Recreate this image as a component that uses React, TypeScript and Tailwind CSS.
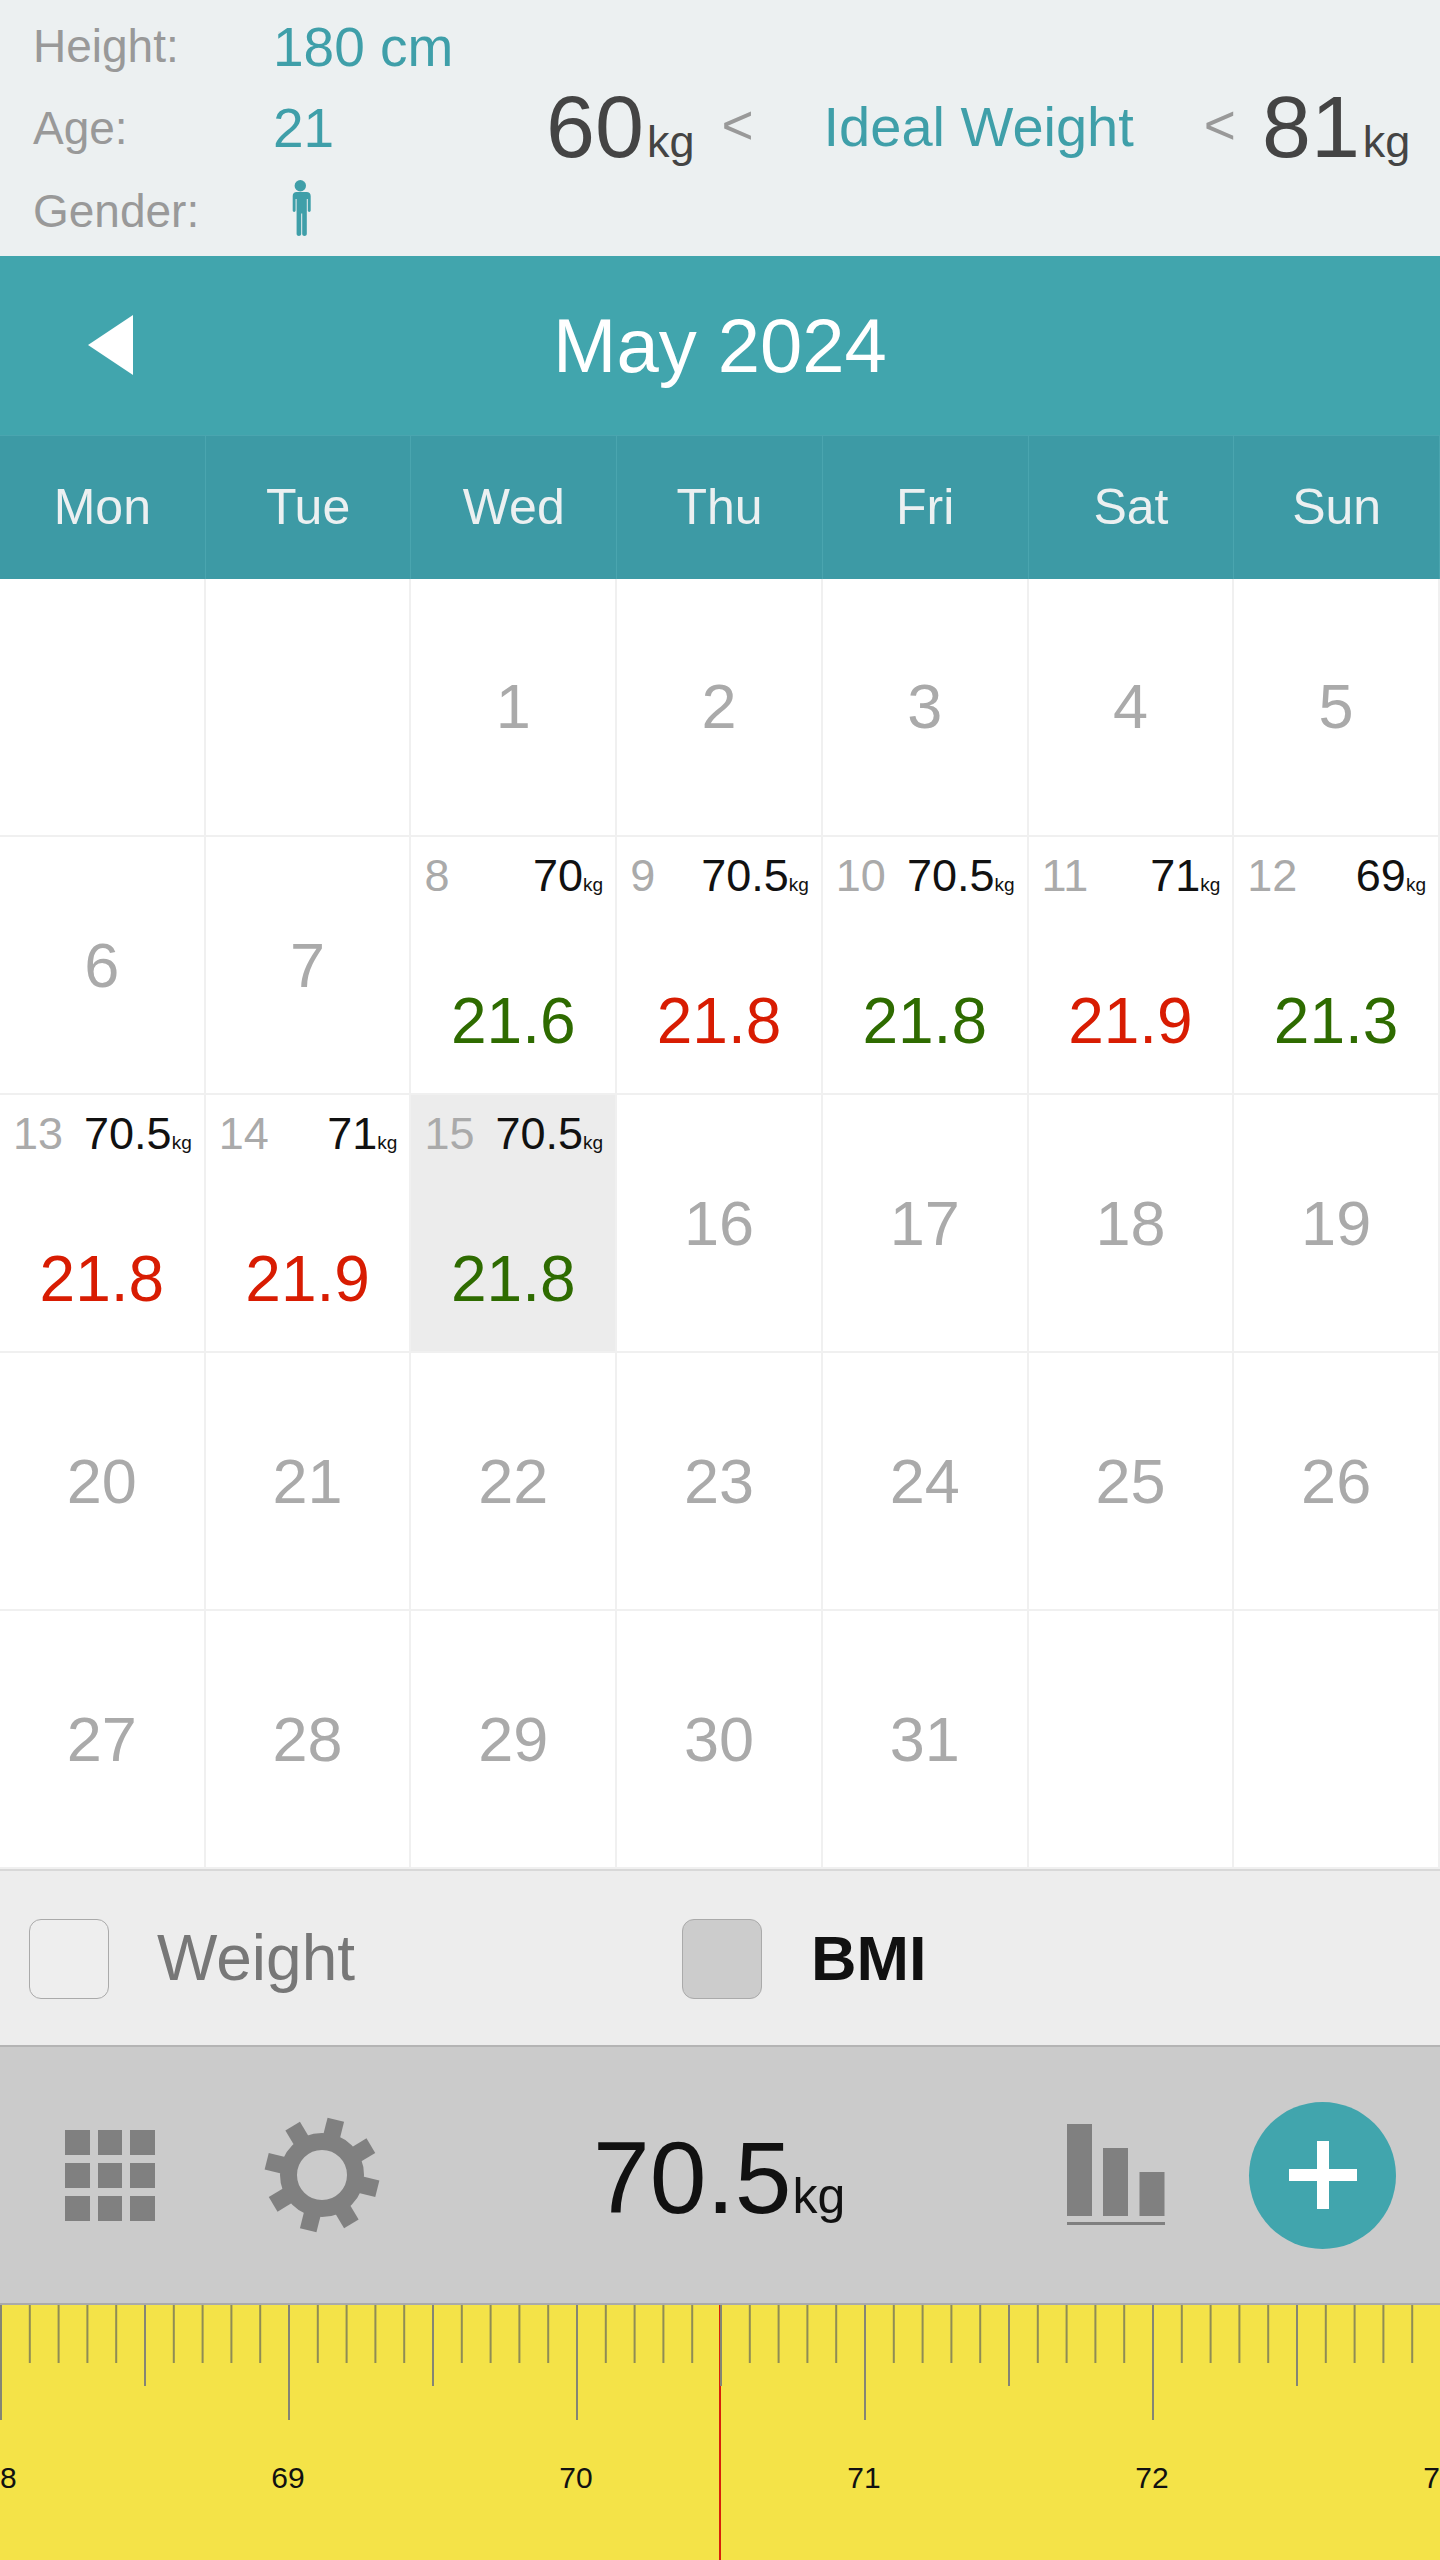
const WEEK_DAYS = ['Mon', 'Tue', 'Wed', 'Thu', 'Fri', 'Sat', 'Sun']

interface DayEntry {
  weight: string
  bmi: string
  over?: boolean
}

const ENTRIES: Record<number, DayEntry> = {
  8: { weight: '70', bmi: '21.6' },
  9: { weight: '70.5', bmi: '21.8', over: true },
  10: { weight: '70.5', bmi: '21.8' },
  11: { weight: '71', bmi: '21.9', over: true },
  12: { weight: '69', bmi: '21.3' },
  13: { weight: '70.5', bmi: '21.8', over: true },
  14: { weight: '71', bmi: '21.9', over: true },
  15: { weight: '70.5', bmi: '21.8' },
}

// May 2024 starts on a Wednesday, two blanks before the 1st
const CELLS: (number | null)[] = [
  null, null,
  ...Array.from({ length: 31 }, (_, i) => i + 1),
  null, null,
]

function PersonIcon() {
  return (
    <svg width="23" height="57" viewBox="0 0 23 57" className="block fill-[#3f9fa9]">
      <circle cx="11.3" cy="6.7" r="5.7" />
      <path d="M5 13h12.6c2.4 0 4.1 1.6 4.1 4v14.6c0 1.9-2.9 1.9-2.9 0V20h-1v35c0 2.6-4.6 2.6-4.6 0V34.5h-1V55c0 2.6-4.6 2.6-4.6 0V20h-1v11.6c0 1.9-2.9 1.9-2.9 0V17c0-2.4 1.7-4 3.8-4z" />
    </svg>
  )
}

function GridIcon() {
  return (
    <div className="grid grid-cols-3 gap-[8px] w-[90px]">
      {Array.from({ length: 9 }, (_, i) => (
        <div key={i} className="h-[25px] bg-[#808080]" />
      ))}
    </div>
  )
}

function GearIcon() {
  const teeth = [14, 59, 104, 149, 194, 239, 284, 329]
  return (
    <svg width="116" height="116" viewBox="-58 -58 116 116" className="block">
      <circle cx="0" cy="0" r="33.5" fill="none" stroke="#808080" strokeWidth="17" />
      {teeth.map(a => (
        <rect key={a} x="-8.5" y="-57" width="17" height="20" fill="#808080" transform={`rotate(${a})`} />
      ))}
    </svg>
  )
}

function BarsIcon() {
  return (
    <svg width="98" height="102" viewBox="0 0 98 102" className="block fill-[#808080]">
      <rect x="0" y="0" width="25" height="92" />
      <rect x="36" y="24" width="25" height="68" />
      <rect x="72.5" y="48" width="25" height="44" />
      <rect x="0" y="98" width="98" height="3" />
    </svg>
  )
}

function PlusButton() {
  return (
    <div className="w-[147px] h-[147px] rounded-full bg-[#41a5ad] flex items-center justify-center">
      <svg width="68" height="68" viewBox="0 0 68 68" className="block fill-white">
        <rect x="28" y="0" width="12" height="68" />
        <rect x="0" y="28" width="68" height="12" />
      </svg>
    </div>
  )
}

function Kg({ className }: { className: string }) {
  return <span className={className}>kg</span>
}

function DayCell({ day, today }: { day: number | null; today: boolean }) {
  const entry = day ? ENTRIES[day] : undefined
  const base = `h-[258px] border-r-2 border-b-2 border-[#f0f0f0] ${today ? 'bg-[#ececec]' : 'bg-white'}`

  if (!entry) {
    return (
      <div className={`${base} flex items-center justify-center text-[63px] leading-none text-[#aaaaaa] ${day && day <= 5 ? 'pb-[2px]' : ''}`}>
        {day}
      </div>
    )
  }

  return (
    <div className={`${base} pt-[16px]`}>
      <div className="flex items-baseline justify-between pl-[13px] pr-[12px] leading-[45px]">
        <span className="text-[45px] text-[#aaaaaa]">{day}</span>
        <span className="text-[45px] text-[#111111]">
          {entry.weight}
          <Kg className="text-[19px]" />
        </span>
      </div>
      <div className={`mt-[82px] text-center text-[64px] leading-[65px] ${entry.over ? 'text-[#d81c02]' : 'text-[#2e6b00]'}`}>
        {entry.bmi}
      </div>
    </div>
  )
}

function Ruler() {
  const step = 28.8
  const ticks = Array.from({ length: 51 }, (_, i) => i)
  const labels = [
    { text: '68', x: 0 },
    { text: '69', x: 288 },
    { text: '70', x: 576 },
    { text: '71', x: 864 },
    { text: '72', x: 1152 },
    { text: '73', x: 1440 },
  ]

  return (
    <div className="relative h-[257px] overflow-hidden bg-[#f4e348] border-t-2 border-[#aaaaaa]">
      <div className="absolute left-[719px] top-0 bottom-0 w-[2px] bg-[#d8200a]" />
      <svg width="1440" height="130" className="relative block">
        {ticks.map(i => {
          const h = i % 10 === 0 ? 115 : i % 5 === 0 ? 81 : 58
          return <rect key={i} x={i * step} y="0" width="2" height={h} fill={i % 5 === 0 ? '#858574' : '#8f8c55'} />
        })}
      </svg>
      {labels.map(l => (
        <span
          key={l.text}
          className="absolute top-[155px] -translate-x-1/2 text-[30px] leading-[36px] text-[#111111]"
          style={{ left: l.x }}
        >
          {l.text}
        </span>
      ))}
    </div>
  )
}

export default function App() {
  return (
    <div className="[font-family:'Liberation_Sans',Arial,sans-serif] w-[1440px] h-[2560px] overflow-hidden bg-white">
      {/* Profile */}
      <header className="h-[256px] flex bg-[#ecf0f1]">
        <div className="w-[546px] pl-[33px] pt-[5px]">
          <div className="h-[82px] flex items-center">
            <span className="w-[240px] text-[46px] text-[#999999]">Height:</span>
            <span className="mt-[2px] text-[55px] text-[#3f9fa9]">180 cm</span>
          </div>
          <div className="h-[82px] flex items-center">
            <span className="w-[240px] text-[46px] text-[#999999]">Age:</span>
            <span className="text-[55px] text-[#3f9fa9]">21</span>
          </div>
          <div className="h-[82px] flex items-center">
            <span className="w-[256px] mt-[2px] text-[46px] text-[#999999]">Gender:</span>
            <div className="-mt-[5px]"><PersonIcon /></div>
          </div>
        </div>
        <div className="flex-1 flex items-baseline pt-[72px] text-[#444444]">
          <span className="text-[88px] leading-[110px]">60</span>
          <Kg className="ml-[3px] text-[45px]" />
          <span className="ml-[27px] -translate-y-[13px] text-[55px] text-[#999999]">&lt;</span>
          <span className="ml-[70px] -translate-y-[11px] text-[56px] text-[#3f9fa9]">Ideal Weight</span>
          <span className="ml-[70px] -translate-y-[13px] text-[55px] text-[#999999]">&lt;</span>
          <span className="ml-[26px] text-[88px] leading-[110px]">81</span>
          <Kg className="ml-[3px] text-[45px]" />
        </div>
      </header>

      {/* Month */}
      <div className="relative h-[179px] flex items-center justify-center bg-[#41a5ad]">
        <div className="absolute left-[88px] top-[59px] w-0 h-0 border-y-[30.5px] border-y-transparent border-r-[45px] border-r-white" />
        <span className="text-[76px] leading-none text-white">May 2024</span>
      </div>

      {/* Week days */}
      <div className="h-[144px] grid grid-cols-7 bg-[#3d9aa5] border-t border-[#4aa5af]">
        {WEEK_DAYS.map(d => (
          <div key={d} className="flex items-center justify-center border-r border-[#4aa5af] text-[50px] text-[#ecf0f1]">
            {d}
          </div>
        ))}
      </div>

      {/* Days */}
      <div className="grid grid-cols-7">
        {CELLS.map((day, i) => (
          <DayCell key={i} day={day} today={day === 15} />
        ))}
      </div>

      {/* Legend */}
      <div className="h-[178px] flex items-center bg-[#ededed] border-t-2 border-b-2 border-[#d8d8d8] border-b-[#b4b4b4]">
        <div className="w-[80px] h-[80px] ml-[29px] mt-[2px] rounded-[12px] border-[1.5px] border-[#aaaaaa] bg-[#eeeeee]" />
        <span className="ml-[48px] text-[64px] leading-none text-[#777777]">Weight</span>
        <div className="w-[80px] h-[80px] ml-[327px] mt-[2px] rounded-[12px] border-[1.5px] border-[#aaaaaa] bg-[#cccccc]" />
        <span className="ml-[49px] text-[63px] leading-none font-bold text-[#111111]">BMI</span>
      </div>

      {/* Current weight */}
      <div className="h-[256px] flex items-center bg-[#cbcbcb]">
        <div className="ml-[65px]"><GridIcon /></div>
        <div className="ml-[109px]"><GearIcon /></div>
        <div className="ml-[213px] mt-[10px] flex items-baseline text-[#111111]">
          <span className="text-[102px] leading-none">70.5</span>
          <Kg className="ml-[1px] text-[50px]" />
        </div>
        <div className="ml-[222px]"><BarsIcon /></div>
        <div className="ml-[84px]"><PlusButton /></div>
      </div>

      <Ruler />
    </div>
  )
}
